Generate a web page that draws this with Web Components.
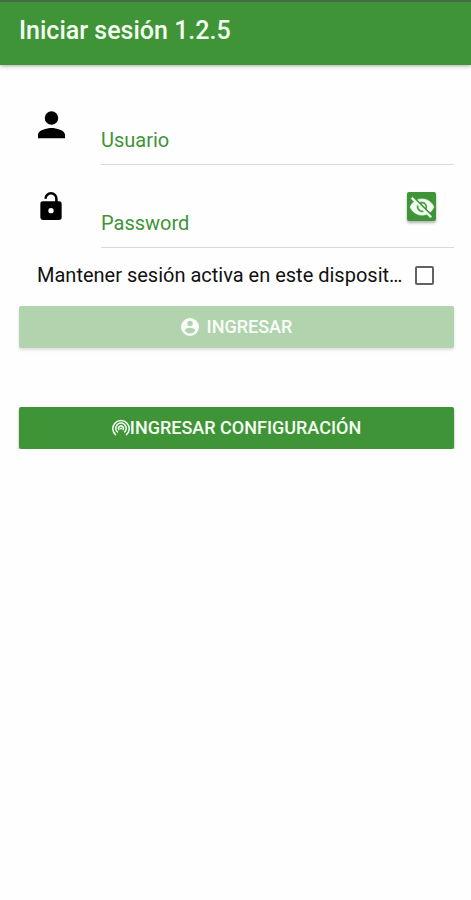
<!DOCTYPE html>
<html lang="es">
<head>
<meta charset="utf-8">
<meta name="viewport" content="width=device-width, initial-scale=1">
<title>Iniciar sesión</title>
<style>
body {
  margin: 0;
  background: #fefefe;
  color: #111;
  font-family: Roboto, sans-serif;
  font-size: 20px;
  --primary: #409438;
}
</style>
</head>
<body>
<login-page></login-page>

<script>
const headerTemplate = document.createElement('template');
headerTemplate.innerHTML = `
<style>
:host {
  display: flex;
  align-items: center;
  box-sizing: border-box;
  height: 65px;
  padding: 0 19px 6px;
  border-top: 2px solid #47694a;
  background: var(--primary);
  color: #f4fff2;
  box-shadow: 0 1px 4px rgba(0, 0, 0, 0.35);
}
h1 {
  margin: 0;
  font-size: 25px;
  font-weight: 500;
  line-height: 28px;
}
</style>
<h1><slot></slot></h1>
`

class AppHeader extends HTMLElement {
  constructor() {
    super();
    this.attachShadow({ mode: 'open' }).appendChild(headerTemplate.content.cloneNode(true));
  }
}
customElements.define('app-header', AppHeader);


const fieldTemplate = document.createElement('template');
fieldTemplate.innerHTML = `
<style>
:host {
  display: flex;
  height: 83px;
  padding-left: 18px;
}
.icon {
  display: flex;
  justify-content: center;
  width: 28px;
  margin-right: 36px;
  padding-top: 25px;
}
.box {
  flex: 1;
  display: flex;
  min-width: 0;
  border-bottom: 1px solid #dadada;
}
/* the label rests on the same cell as the input until something is typed */
.text {
  flex: 1;
  display: grid;
  align-content: end;
  min-width: 0;
  padding-bottom: 12px;
}
label, input {
  grid-area: 1 / 1;
  line-height: 24px;
}
label {
  color: var(--primary);
  pointer-events: none;
}
input {
  box-sizing: border-box;
  width: 100%;
  height: 24px;
  padding: 0;
  border: 0;
  outline: 0;
  background: none;
  color: inherit;
  font-family: inherit;
  font-size: 20px;
}
.text:has(input:not(:placeholder-shown)) label {
  visibility: hidden;
}
</style>
<div class="icon"><slot name="icon"></slot></div>
<div class="box">
  <div class="text">
    <input id="field" placeholder=" ">
    <label for="field"></label>
  </div>
  <slot name="end"></slot>
</div>
`

class LoginField extends HTMLElement {
  constructor() {
    super();
    this.attachShadow({ mode: 'open' }).appendChild(fieldTemplate.content.cloneNode(true));
  }

  connectedCallback() {
    this.input = this.shadowRoot.querySelector('input');
    this.input.type = this.getAttribute('type') || 'text';
    this.shadowRoot.querySelector('label').textContent = this.getAttribute('label');
  }
}
customElements.define('login-field', LoginField);


const checkTemplate = document.createElement('template');
checkTemplate.innerHTML = `
<style>
:host {
  display: flex;
  align-items: center;
  gap: 10px;
  box-sizing: border-box;
  height: 58px;
  padding: 0 20px 4px 18px;
}
label {
  flex: 1;
  overflow: hidden;
  white-space: nowrap;
  text-overflow: ellipsis;
  line-height: 28px;
}
input {
  appearance: none;
  flex: none;
  box-sizing: border-box;
  width: 19px;
  height: 19px;
  margin: 0;
  border: 2px solid #626262;
  border-radius: 2px;
}
input:checked {
  border-color: var(--primary);
  background: var(--primary);
}
</style>
<label for="check"><slot></slot></label>
<input type="checkbox" id="check">
`

class LoginCheck extends HTMLElement {
  constructor() {
    super();
    this.attachShadow({ mode: 'open' }).appendChild(checkTemplate.content.cloneNode(true));
  }
}
customElements.define('login-check', LoginCheck);


const buttonTemplate = document.createElement('template');
buttonTemplate.innerHTML = `
<style>
:host {
  display: block;
}
button {
  display: flex;
  align-items: center;
  justify-content: center;
  gap: var(--icon-gap, 0);
  width: 100%;
  height: 42px;
  padding: 0;
  border: 0;
  border-radius: 2px;
  background: var(--primary);
  color: #f4fff2;
  font-family: inherit;
  font-size: 18px;
  font-weight: 500;
  line-height: 24px;
  box-shadow: 0 2px 3px rgba(0, 0, 0, 0.3);
}
button:disabled {
  opacity: 0.4;
}
:host([small]) button {
  width: 29px;
  height: 29px;
}
</style>
<button type="button"><slot name="icon"></slot><slot></slot></button>
`

class LoginButton extends HTMLElement {
  constructor() {
    super();
    this.attachShadow({ mode: 'open' }).appendChild(buttonTemplate.content.cloneNode(true));
  }

  connectedCallback() {
    const button = this.shadowRoot.querySelector('button');
    button.disabled = this.hasAttribute('disabled');
    if (this.hasAttribute('label')) {
      button.setAttribute('aria-label', this.getAttribute('label'));
    }
  }
}
customElements.define('login-button', LoginButton);


const pageTemplate = document.createElement('template');
pageTemplate.innerHTML = `
<style>
:host {
  display: block;
}
main {
  padding: 17px 17px 0 19px;
}
svg {
  display: block;
  flex: none;
}
.eye {
  padding: 27px 18px 0 0;
}
.enter {
  --icon-gap: 8px;
  margin-bottom: 59px;
}
</style>
<app-header>Iniciar sesión 1.2.5</app-header>
<main>
  <login-field label="Usuario">
    <svg slot="icon" width="27" height="32" viewBox="4 2 16 18"><path d="M12 12a4 4 0 1 0 0-8 4 4 0 0 0 0 8zm0 2c-2.7 0-8 1.3-8 4v2h16v-2c0-2.7-5.3-4-8-4z"/></svg>
  </login-field>
  <login-field label="Password" type="password">
    <svg slot="icon" width="24" height="32" viewBox="3 0 18 23"><path d="M18 8h-1V6a5 5 0 0 0-10 0h1.9a3.1 3.1 0 0 1 6.2 0v2H6a2 2 0 0 0-2 2v10c0 1.100.9 2 2 2h12a2 2 0 0 0 2-2V10a2 2 0 0 0-2-2zm-6 9a2 2 0 1 1 0-4 2 2 0 0 1 0 4z"/></svg>
    <login-button slot="end" class="eye" small label="Mostrar password">
      <svg slot="icon" width="26" height="26" viewBox="0 0 24 24" fill="currentColor" stroke="currentColor" stroke-width="0.5"><path d="M12 7a5 5 0 0 1 4.640 6.830l2.920 2.920A11.820 11.820 0 0 0 22.990 12c-1.730-4.390-6-7.500-11-7.500-1.400 0-2.740.25-3.980.7l2.160 2.160C10.740 7.130 11.350 7 12 7zM2 4.270l2.280 2.280.46.46A11.800 11.800 0 0 0 1 12c1.730 4.390 6 7.500 11 7.500 1.550 0 3.030-.3 4.380-.84l.42.42L19.730 22 21 20.730 3.270 3 2 4.270zM7.530 9.800l1.550 1.550A3 3 0 0 0 12.650 14.920l1.550 1.550A5 5 0 0 1 7.530 9.800zm4.310-.78 3.150 3.150.02-.16a3 3 0 0 0-3.170-2.990z"/></svg>
    </login-button>
  </login-field>
  <login-check>Mantener sesión activa en este dispositivo</login-check>
  <login-button class="enter" disabled>
    <svg slot="icon" width="18" height="18" viewBox="2 2 20 20" fill="currentColor"><path d="M12 2a10 10 0 1 0 0 20 10 10 0 0 0 0-20zm0 3a3 3 0 1 1 0 6 3 3 0 0 1 0-6zm0 14.2a7.200 7.200 0 0 1-6-3.220c.03-1.990 4-3.080 6-3.080s5.970 1.090 6 3.080a7.200 7.200 0 0 1-6 3.220z"/></svg>
    INGRESAR
  </login-button>
  <login-button>
    <svg slot="icon" width="18" height="18" viewBox="0 0 18 18" fill="none" stroke="currentColor" stroke-width="1.5"><path d="M4 16.2a8.200 8.200 0 1 1 10 0M5.800 13.400a5.200 5.200 0 1 1 6.400 0"/><path d="M7.300 11a2.400 2.400 0 1 1 3.400 0"/><circle cx="9" cy="9.500" r="1" fill="currentColor" stroke="none"/></svg>
    INGRESAR CONFIGURACIÓN
  </login-button>
</main>
`

class LoginPage extends HTMLElement {
  constructor() {
    super();
    this.attachShadow({ mode: 'open' }).appendChild(pageTemplate.content.cloneNode(true));
  }
}
customElements.define('login-page', LoginPage);
</script>
</body>
</html>
